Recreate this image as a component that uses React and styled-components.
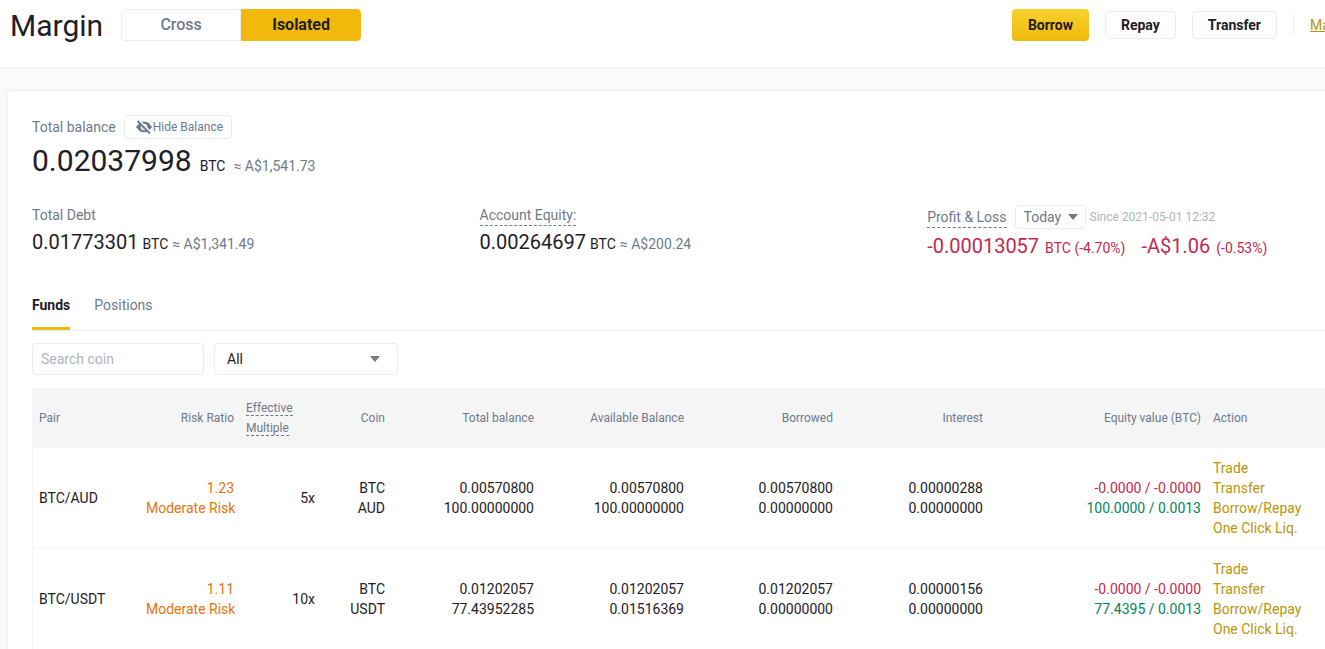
import React from 'react';
import styled, { createGlobalStyle, css } from 'styled-components';

const colors = {
  text: '#1e2026',
  muted: '#707a8a',
  faint: '#aeb4bc',
  border: '#eaecef',
  yellow: '#f0b90b',
  link: '#b8960c',
  sell: '#c2294f',
  buy: '#02845f',
  warn: '#e8730c',
};

const GlobalStyle = createGlobalStyle`
  *, *::before, *::after {
    box-sizing: border-box;
  }

  body {
    margin: 0;
    background: #fafafa;
    color: ${colors.text};
    font-family: Roboto, 'Liberation Sans', sans-serif;
    font-size: 14px;
    line-height: 20px;
  }

  button, input, select {
    font: inherit;
    color: inherit;
    margin: 0;
  }
`;

const Header = styled.header`
  display: flex;
  align-items: center;
  gap: 16px;
  height: 67px;
  padding: 0 0 17px 10px;
  background: #fff;
  box-shadow: 0 1px 2px rgba(24, 26, 32, 0.06);
  overflow: hidden;
  white-space: nowrap;
`;

const Title = styled.h1`
  margin: 0;
  padding: 2px 2px 0 0;
  font-size: 30px;
  font-weight: 400;
  line-height: 40px;
`;

const Toggle = styled.div`
  display: flex;
`;

const ToggleButton = styled.button`
  width: 120px;
  height: 32px;
  padding: 0;
  border: 1px solid ${({ $active }) => ($active ? colors.yellow : colors.border)};
  border-radius: ${({ $active }) => ($active ? '0 4px 4px 0' : '4px 0 0 4px')};
  background: ${({ $active }) => ($active ? colors.yellow : '#fff')};
  color: ${({ $active }) => ($active ? colors.text : colors.muted)};
  font-size: 16px;
  font-weight: ${({ $active }) => ($active ? 700 : 500)};
`;

const Actions = styled.div`
  display: flex;
  align-items: center;
  gap: 16px;
  margin-left: auto;
`;

const ActionButton = styled.button`
  height: 28px;
  padding: 0 15px;
  border: 1px solid ${colors.border};
  border-radius: 4px;
  background: #fff;
  font-weight: 700;

  ${({ $primary }) =>
    $primary &&
    css`
      height: 32px;
      padding: 0 16px;
      border: 0;
      background: linear-gradient(180deg, #f8d12f 0%, #f0b90b 100%);
    `}
`;

const MoreLink = styled.a`
  width: 32px;
  padding-left: 16px;
  border-left: 1px solid ${colors.border};
  color: ${colors.link};
  overflow: hidden;
`;

const Card = styled.main`
  margin: 24px 0 0 8px;
  padding: 24px 0 0 24px;
  border-radius: 4px 0 0 0;
  background: #fff;
  box-shadow: 0 0 4px rgba(24, 26, 32, 0.08);
`;

const LabelRow = styled.div`
  display: flex;
  align-items: center;
  gap: 8px;
  height: ${({ $tall }) => ($tall ? 28 : 24)}px;
  color: ${colors.muted};
`;

const Hint = styled.span`
  border-bottom: 1px dashed ${colors.muted};
`;

const HideButton = styled.button`
  display: flex;
  align-items: center;
  height: 24px;
  padding: 0 8px 0 10px;
  border: 1px solid ${colors.border};
  border-radius: 4px;
  background: #fff;
  font-size: 12px;
`;

const Amount = styled.div`
  display: flex;
  align-items: baseline;
  gap: ${({ $gap }) => $gap || 4}px;
  color: ${({ $negative }) => ($negative ? colors.sell : colors.text)};
`;

const Value = styled.span`
  font-size: ${({ $large }) => ($large ? 30 : 20)}px;
  line-height: ${({ $large }) => ($large ? 44 : 30)}px;
`;

const Fiat = styled.span`
  color: ${colors.muted};
`;

const Stats = styled.section`
  display: grid;
  grid-template-columns: 9fr 9fr 8fr;
  margin-top: 20px;
  white-space: nowrap;
`;

const Since = styled.span`
  margin-left: -4px;
  color: ${colors.faint};
  font-size: 12px;
`;

const SelectBox = styled.div`
  position: relative;
  width: ${({ $small }) => ($small ? '71px' : '184px')};
  height: ${({ $small }) => ($small ? '24px' : '32px')};

  select {
    appearance: none;
    width: 100%;
    height: 100%;
    padding: 0 ${({ $small }) => ($small ? '8px' : '12px')};
    border: 1px solid ${colors.border};
    border-radius: 4px;
    background: #fff;
  }

  svg {
    position: absolute;
    top: 50%;
    right: ${({ $small }) => ($small ? '8px' : '18px')};
    transform: translateY(-50%);
    pointer-events: none;
  }
`;

const Tabs = styled.nav`
  display: flex;
  gap: 24px;
  margin-top: 30px;
  border-bottom: 1px solid ${colors.border};
`;

const Tab = styled.button`
  padding: 4px 0 12px;
  border: 0;
  border-bottom: 3px solid ${({ $active }) => ($active ? colors.yellow : 'transparent')};
  background: none;
  color: ${({ $active }) => ($active ? colors.text : colors.muted)};
  font-weight: ${({ $active }) => ($active ? 700 : 400)};
`;

const Filters = styled.div`
  display: flex;
  gap: 10px;
  padding: 12px 0 13px;
`;

const SearchInput = styled.input`
  width: 172px;
  height: 32px;
  padding: 0 8px;
  border: 1px solid ${colors.border};
  border-radius: 4px;

  &::placeholder {
    color: ${colors.faint};
  }
`;

const Table = styled.table`
  width: 100%;
  table-layout: fixed;
  border-collapse: separate;
  border-spacing: 0;
`;

const Th = styled.th`
  width: ${({ $width }) => $width}px;
  padding: 10px 6px;
  background: #f5f5f5;
  color: ${colors.muted};
  font-size: 12px;
  font-weight: 400;
  text-align: ${({ $align }) => $align || 'right'};

  &:first-child {
    border-left: 1px solid #f5f5f5;
  }
`;

const Td = styled.td`
  padding: 10px 6px;
  border-bottom: 1px solid #f5f5f5;
  text-align: ${({ $align }) => $align || 'right'};
  white-space: nowrap;

  &:first-child {
    border-left: 1px solid #f5f5f5;
  }
`;

const Line = styled.div`
  color: ${({ $color }) => $color || 'inherit'};
`;

const RowLink = styled.a`
  display: block;
  color: ${colors.link};
  text-decoration: none;
`;

const columns = [
  { label: 'Pair', width: 108, align: 'left' },
  { label: 'Risk Ratio', width: 100 },
  { label: 'Effective Multiple', width: 81, align: 'left', hint: true },
  { label: 'Coin', width: 70 },
  { label: 'Total balance', width: 149 },
  { label: 'Available Balance', width: 150 },
  { label: 'Borrowed', width: 149 },
  { label: 'Interest', width: 150 },
  { label: 'Equity value (BTC)', width: 218 },
  { label: 'Action', width: 118, align: 'left' },
];

const pairs = [
  {
    pair: 'BTC/AUD',
    risk: '1.23',
    multiple: '5x',
    cells: [
      ['BTC', 'AUD'],
      ['0.00570800', '100.00000000'],
      ['0.00570800', '100.00000000'],
      ['0.00570800', '0.00000000'],
      ['0.00000288', '0.00000000'],
    ],
    equity: ['-0.0000 / -0.0000', '100.0000 / 0.0013'],
  },
  {
    pair: 'BTC/USDT',
    risk: '1.11',
    multiple: '10x',
    cells: [
      ['BTC', 'USDT'],
      ['0.01202057', '77.43952285'],
      ['0.01202057', '0.01516369'],
      ['0.01202057', '0.00000000'],
      ['0.00000156', '0.00000000'],
    ],
    equity: ['-0.0000 / -0.0000', '77.4395 / 0.0013'],
  },
];

const rowActions = ['Trade', 'Transfer', 'Borrow/Repay', 'One Click Liq.'];

const Caret = () => (
  <svg width="10" height="6" viewBox="0 0 10 6" fill={colors.muted} aria-hidden="true">
    <path d="M0 0h10L5 6z" />
  </svg>
);

const EyeOff = () => (
  <svg width="18" height="16" viewBox="0 0 18 16" aria-hidden="true">
    <path d="M1 8l3.500-4L7 2.800h4L14 4l3 4-3 4-3 1.200H7L4.500 12z" fill={colors.muted} />
    <circle cx="9" cy="8" r="3.200" fill="#fff" />
    <circle cx="9" cy="8" r="1.700" fill={colors.muted} />
    <path d="M3.500 1L16 13.500" stroke="#fff" strokeWidth="2" />
    <path d="M2.500 2L15 14.500" stroke={colors.muted} strokeWidth="1.800" />
  </svg>
);

const App = () => (
  <>
    <GlobalStyle />
    <Header>
      <Title>Margin</Title>
      <Toggle>
        <ToggleButton type="button">Cross</ToggleButton>
        <ToggleButton type="button" $active>
          Isolated
        </ToggleButton>
      </Toggle>
      <Actions>
        <ActionButton type="button" $primary>
          Borrow
        </ActionButton>
        <ActionButton type="button">Repay</ActionButton>
        <ActionButton type="button">Transfer</ActionButton>
        <MoreLink href="#">Ma</MoreLink>
      </Actions>
    </Header>
    <Card>
      <LabelRow>
        Total balance
        <HideButton type="button">
          <EyeOff />
          Hide Balance
        </HideButton>
      </LabelRow>
      <Amount $gap={8}>
        <Value $large>0.02037998</Value>
        <span>BTC</span>
        <Fiat>≈ A$1,541.73</Fiat>
      </Amount>
      <Stats>
        <div>
          <LabelRow>Total Debt</LabelRow>
          <Amount>
            <Value>0.01773301</Value>
            <span>BTC</span>
            <Fiat>≈ A$1,341.49</Fiat>
          </Amount>
        </div>
        <div>
          <LabelRow>
            <Hint>Account Equity:</Hint>
          </LabelRow>
          <Amount>
            <Value>0.00264697</Value>
            <span>BTC</span>
            <Fiat>≈ A$200.24</Fiat>
          </Amount>
        </div>
        <div>
          <LabelRow $tall>
            <Hint>Profit &amp; Loss</Hint>
            <SelectBox $small>
              <select aria-label="Profit and loss period" defaultValue="Today">
                <option>Today</option>
              </select>
              <Caret />
            </SelectBox>
            <Since>Since 2021-05-01 12:32</Since>
          </LabelRow>
          <Amount $negative $gap={6}>
            <Value>-0.00013057</Value>
            <span>BTC (-4.70%)</span>
            <Value>&nbsp;&nbsp;-A$1.06</Value>
            <span>(-0.53%)</span>
          </Amount>
        </div>
      </Stats>
      <Tabs>
        <Tab type="button" $active>
          Funds
        </Tab>
        <Tab type="button">Positions</Tab>
      </Tabs>
      <Filters>
        <SearchInput type="text" placeholder="Search coin" aria-label="Search coin" />
        <SelectBox>
          <select aria-label="Filter pairs" defaultValue="All">
            <option>All</option>
          </select>
          <Caret />
        </SelectBox>
      </Filters>
      <Table>
        <thead>
          <tr>
            {columns.map(({ label, width, align, hint }) => (
              <Th key={label} $width={width} $align={align}>
                {hint ? <Hint>{label}</Hint> : label}
              </Th>
            ))}
          </tr>
        </thead>
        <tbody>
          {pairs.map(({ pair, risk, multiple, cells, equity }) => (
            <tr key={pair}>
              <Td $align="left">{pair}</Td>
              <Td>
                <Line $color={colors.warn}>{risk}</Line>
                <Line $color={colors.warn}>Moderate Risk</Line>
              </Td>
              <Td>{multiple}</Td>
              {cells.map(([base, quote], index) => (
                <Td key={index}>
                  <Line>{base}</Line>
                  <Line>{quote}</Line>
                </Td>
              ))}
              <Td>
                <Line $color={colors.sell}>{equity[0]}</Line>
                <Line $color={colors.buy}>{equity[1]}</Line>
              </Td>
              <Td $align="left">
                {rowActions.map((action) => (
                  <RowLink href="#" key={action}>
                    {action}
                  </RowLink>
                ))}
              </Td>
            </tr>
          ))}
        </tbody>
      </Table>
    </Card>
  </>
);

export default App;
